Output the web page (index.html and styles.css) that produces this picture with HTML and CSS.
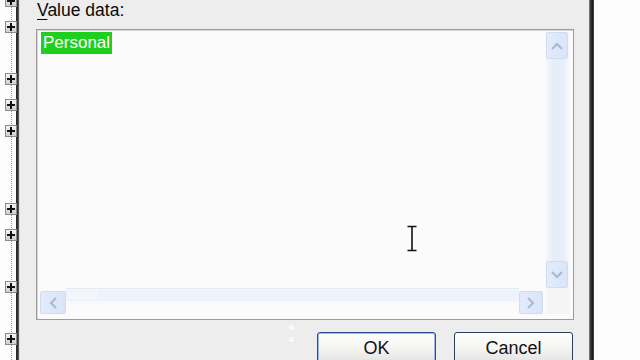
FILE: index.html
```html
<!DOCTYPE html>
<html>
<head>
<meta charset="utf-8">
<link rel="stylesheet" href="styles.css">
</head>
<body>
<div class="tree">
  <div class="row"><span class="pm"></span></div>
  <div class="row"><span class="pm"></span></div>
  <div class="row"></div>
  <div class="row"><span class="pm"></span></div>
  <div class="row"><span class="pm"></span></div>
  <div class="row"><span class="pm"></span></div>
  <div class="row"></div>
  <div class="row"></div>
  <div class="row"><span class="pm"></span></div>
  <div class="row"><span class="pm"></span></div>
  <div class="row"></div>
  <div class="row"><span class="pm"></span></div>
  <div class="row"></div>
  <div class="row"><span class="pm"></span></div>
</div>
<div class="frame-left"></div>
<div class="dialog">
  <div class="label"><u>V</u>alue data:</div>
  <div class="textbox">
    <div class="text"><span class="sel">Personal</span></div>
    <div class="vscroll">
      <div class="sbtn">
        <svg width="14" height="10" viewBox="0 0 14 10"><path d="M2 8 L7 3 L12 8" fill="none" stroke="#a9b9d9" stroke-width="2.2"/></svg>
      </div>
      <div class="vtrack"></div>
      <div class="sbtn">
        <svg width="14" height="10" viewBox="0 0 14 10"><path d="M2 2 L7 7 L12 2" fill="none" stroke="#a9b9d9" stroke-width="2.2"/></svg>
      </div>
    </div>
    <div class="hscroll">
      <div class="sbtn hbtn">
        <svg width="10" height="14" viewBox="0 0 10 14"><path d="M8 2 L3 7 L8 12" fill="none" stroke="#a9b9d9" stroke-width="2.2"/></svg>
      </div>
      <div class="htrack"><div class="hthumb"></div></div>
      <div class="sbtn hbtn">
        <svg width="10" height="14" viewBox="0 0 10 14"><path d="M2 2 L7 7 L2 12" fill="none" stroke="#a9b9d9" stroke-width="2.2"/></svg>
      </div>
    </div>
    <div class="corner"></div>
  </div>
  <div class="buttons">
    <button class="btn default">OK</button>
    <button class="btn">Cancel</button>
  </div>
  <span class="dot d1"></span>
  <span class="dot d2"></span>
  <svg class="ibeam" width="12" height="28" viewBox="0 0 12 28">
    <path d="M1.5 1.5 H10.5 M6 1.5 V25.5 M1.5 25.5 H10.5" fill="none" stroke="#111" stroke-width="1.6"/>
  </svg>
</div>
<div class="frame-right"></div>
<div class="outside"></div>
</body>
</html>
```

FILE: styles.css
```css
html, body {
  margin: 0;
  padding: 0;
}
body {
  width: 640px;
  height: 360px;
  overflow: hidden;
  display: flex;
  font-family: "Liberation Sans", Arial, sans-serif;
  background: #fdfdfd;
}
.tree {
  width: 16px;
  flex: none;
  background-color: #fdfdfd;
  background-image: repeating-linear-gradient(to bottom, #9a9a9a 0 1px, transparent 1px 2px);
  background-size: 1px 100%;
  background-position: 11px 0;
  background-repeat: no-repeat;
  display: flex;
  flex-direction: column;
  margin-top: -5px;
  height: 380px;
}
.row {
  height: 26px;
  flex: none;
  position: relative;
}
.pm {
  display: block;
  margin-left: 5px;
  width: 10px;
  height: 10px;
  border: 1px solid #8a8a8a;
  background: linear-gradient(#f4f4f4, #cfcfcf);
  position: relative;
}
.pm::before, .pm::after {
  content: "";
  position: absolute;
  background: #111;
}
.pm::before {
  left: 1px;
  top: 4px;
  width: 8px;
  height: 2px;
}
.pm::after {
  left: 4px;
  top: 1px;
  width: 2px;
  height: 8px;
}
.frame-left {
  width: 3px;
  flex: none;
  background: linear-gradient(to right, #222, #3a3a3a 70%, #777);
}
.dialog {
  width: 570px;
  flex: none;
  background: #ededed;
  display: flex;
  flex-direction: column;
  padding: 0 15px 0 16px;
  box-sizing: border-box;
  position: relative;
  border-left: 1px solid #dcdcdc;
}
.label {
  font-size: 17.5px;
  line-height: 21px;
  color: #0a0a0a;
  padding-left: 1px;
  height: 20px;
}
.label u {
  text-decoration-thickness: 1px;
  text-underline-offset: 3px;
}
.textbox {
  margin-top: 9px;
  height: 291px;
  border: 1px solid #9c9c9c;
  box-shadow: inset 1px 1px 0 #d6d6d6;
  background: #fbfbfc;
  box-sizing: border-box;
  padding: 2px 3px 5px 3px;
  display: grid;
  grid-template-columns: 1fr 24px;
  grid-template-rows: 256px 26px;
}
.text {
  padding-left: 1px;
  font-size: 17px;
  line-height: 22px;
}
.sel {
  background: #1ecf1e;
  color: #ffffff;
  padding: 0 2px 0 2px;
  display: inline-block;
}
.vscroll {
  display: flex;
  flex-direction: column;
  background: linear-gradient(to right, #f6f8fd, #e6ecf8 30%, #e9eefa 70%, #f7f9fd);
}
.sbtn {
  width: 22px;
  height: 27px;
  box-sizing: border-box;
  border: 1px solid #cfdcf3;
  border-radius: 2px;
  background: linear-gradient(to right, #e4ecfb, #d8e4f8);
  display: flex;
  align-items: center;
  justify-content: center;
  flex: none;
}
.vtrack {
  flex: 1;
}
.hscroll {
  display: flex;
  padding-top: 3px;
}
.hbtn {
  width: 26px;
  height: 23px;
}
.hbtn:last-child {
  width: 24px;
  margin-right: 3px;
}
.htrack {
  flex: 1;
  position: relative;
  background: linear-gradient(to bottom, #f7f9fd 0 1px, #eef2fa 1px 12px, #f8f9fc 12px);
  border-top: 1px solid #e3e9f4;
  margin-top: -3px;
  height: 15px;
}
.hthumb {
  position: absolute;
  left: 2px;
  top: 2px;
  width: 30px;
  height: 8px;
  background: #f4f6fb;
}
.corner {
  background: #f5f5f5;
}
.buttons {
  display: flex;
  justify-content: flex-end;
  gap: 18px;
  margin-top: 12px;
  padding-right: 1px;
}
.btn {
  width: 119px;
  height: 36px;
  flex: none;
  border: 1px solid #2c3f60;
  border-radius: 3px;
  background: linear-gradient(#ffffff, #f3f3f0 50%, #e2e3e3 85%, #d2d4d8);
  font-family: "Liberation Sans", Arial, sans-serif;
  font-size: 18px;
  color: #111;
  padding: 0 0 4px 0;
  text-align: center;
}
.btn.default {
  border-color: #2c4c8c;
  box-shadow: inset 0 0 0 1px #9fb7e8, inset 0 -2px 0 1px #7d99d8;
}
.dot {
  position: absolute;
  width: 5px;
  height: 5px;
  background: #f8f8f8;
  left: 269px;
}
.d1 { top: 325px; }
.d2 { top: 337px; }
.ibeam {
  position: absolute;
  left: 386px;
  top: 225px;
}
.frame-right {
  width: 5px;
  flex: none;
  background: linear-gradient(to right, #8a8a8a, #333 35%, #1c1c1c 70%, #555);
}
.outside {
  flex: 1;
  background: #fdfdfd;
}
```
